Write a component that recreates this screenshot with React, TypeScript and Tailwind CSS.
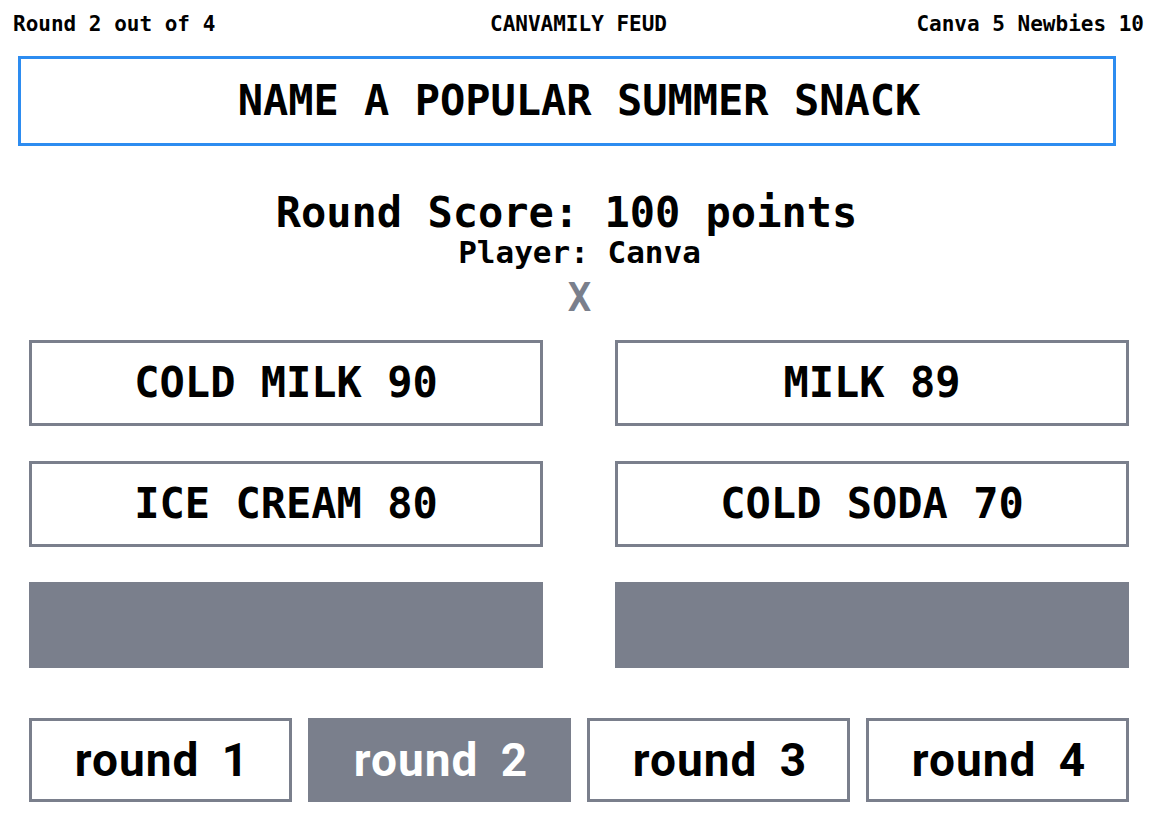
import React from "react";

const mono = { fontFamily: '"DejaVu Sans Mono", "Liberation Mono", monospace' };
const sans = { fontFamily: 'Roboto, "Liberation Sans", sans-serif' };

function AnswerBox({ text }: { text?: string }) {
  if (!text) {
    return <div className="h-[86px] bg-[#7a7f8c]" />;
  }
  return (
    <div
      className="h-[86px] border-[3px] border-[#7a7f8c] flex items-center justify-center text-[42px] leading-none font-bold text-black"
      style={mono}
    >
      {text}
    </div>
  );
}

function RoundButton({ n, active }: { n: number; active?: boolean }) {
  return (
    <div
      className={
        "h-[84px] flex items-center justify-center pl-[3px] text-[46px] font-bold leading-none tracking-[1px] [word-spacing:10px] " +
        (active
          ? "bg-[#7a7f8c] text-white"
          : "border-[3px] border-[#7a7f8c] bg-white text-black")
      }
      style={sans}
    >
      round {n}
    </div>
  );
}

export default function App() {
  return (
    <div className="w-[1159px] h-[827px] bg-white overflow-hidden text-black">
      <div
        className="grid grid-cols-[1fr_auto_1fr] pl-[13px] pr-[15px] pt-[12px] text-[21px] leading-[24px] font-bold"
        style={mono}
      >
        <span>Round 2 out of 4</span>
        <span>CANVAMILY FEUD</span>
        <span className="text-right">Canva 5 Newbies 10</span>
      </div>

      <div className="mt-[20px] ml-[18px] w-[1098px] h-[90px] border-[3px] border-[#2d8cf0] flex items-center justify-center pl-[24px]">
        <span className="text-[42px] leading-none font-bold" style={mono}>
          NAME A POPULAR SUMMER SNACK
        </span>
      </div>

      <div className="flex flex-col items-center" style={mono}>
        <div className="mt-[45px] pr-[26px] text-[42px] leading-[44px] font-bold">
          Round Score: 100 points
        </div>
        <div className="text-[31px] leading-[34px] font-bold">Player: Canva</div>
        <div className="mt-[9px] text-[39px] leading-[40px] font-bold text-[#7a7f8c]">X</div>
      </div>

      <div className="mt-[22px] grid grid-cols-2 gap-x-[72px] gap-y-[35px] pl-[29px] pr-[30px]">
        <AnswerBox text="COLD MILK 90" />
        <AnswerBox text="MILK 89" />
        <AnswerBox text="ICE CREAM 80" />
        <AnswerBox text="COLD SODA 70" />
        <AnswerBox />
        <AnswerBox />
      </div>

      <div className="mt-[50px] grid grid-cols-4 gap-x-[16px] pl-[29px] pr-[30px]">
        <RoundButton n={1} />
        <RoundButton n={2} active />
        <RoundButton n={3} />
        <RoundButton n={4} />
      </div>
    </div>
  );
}
